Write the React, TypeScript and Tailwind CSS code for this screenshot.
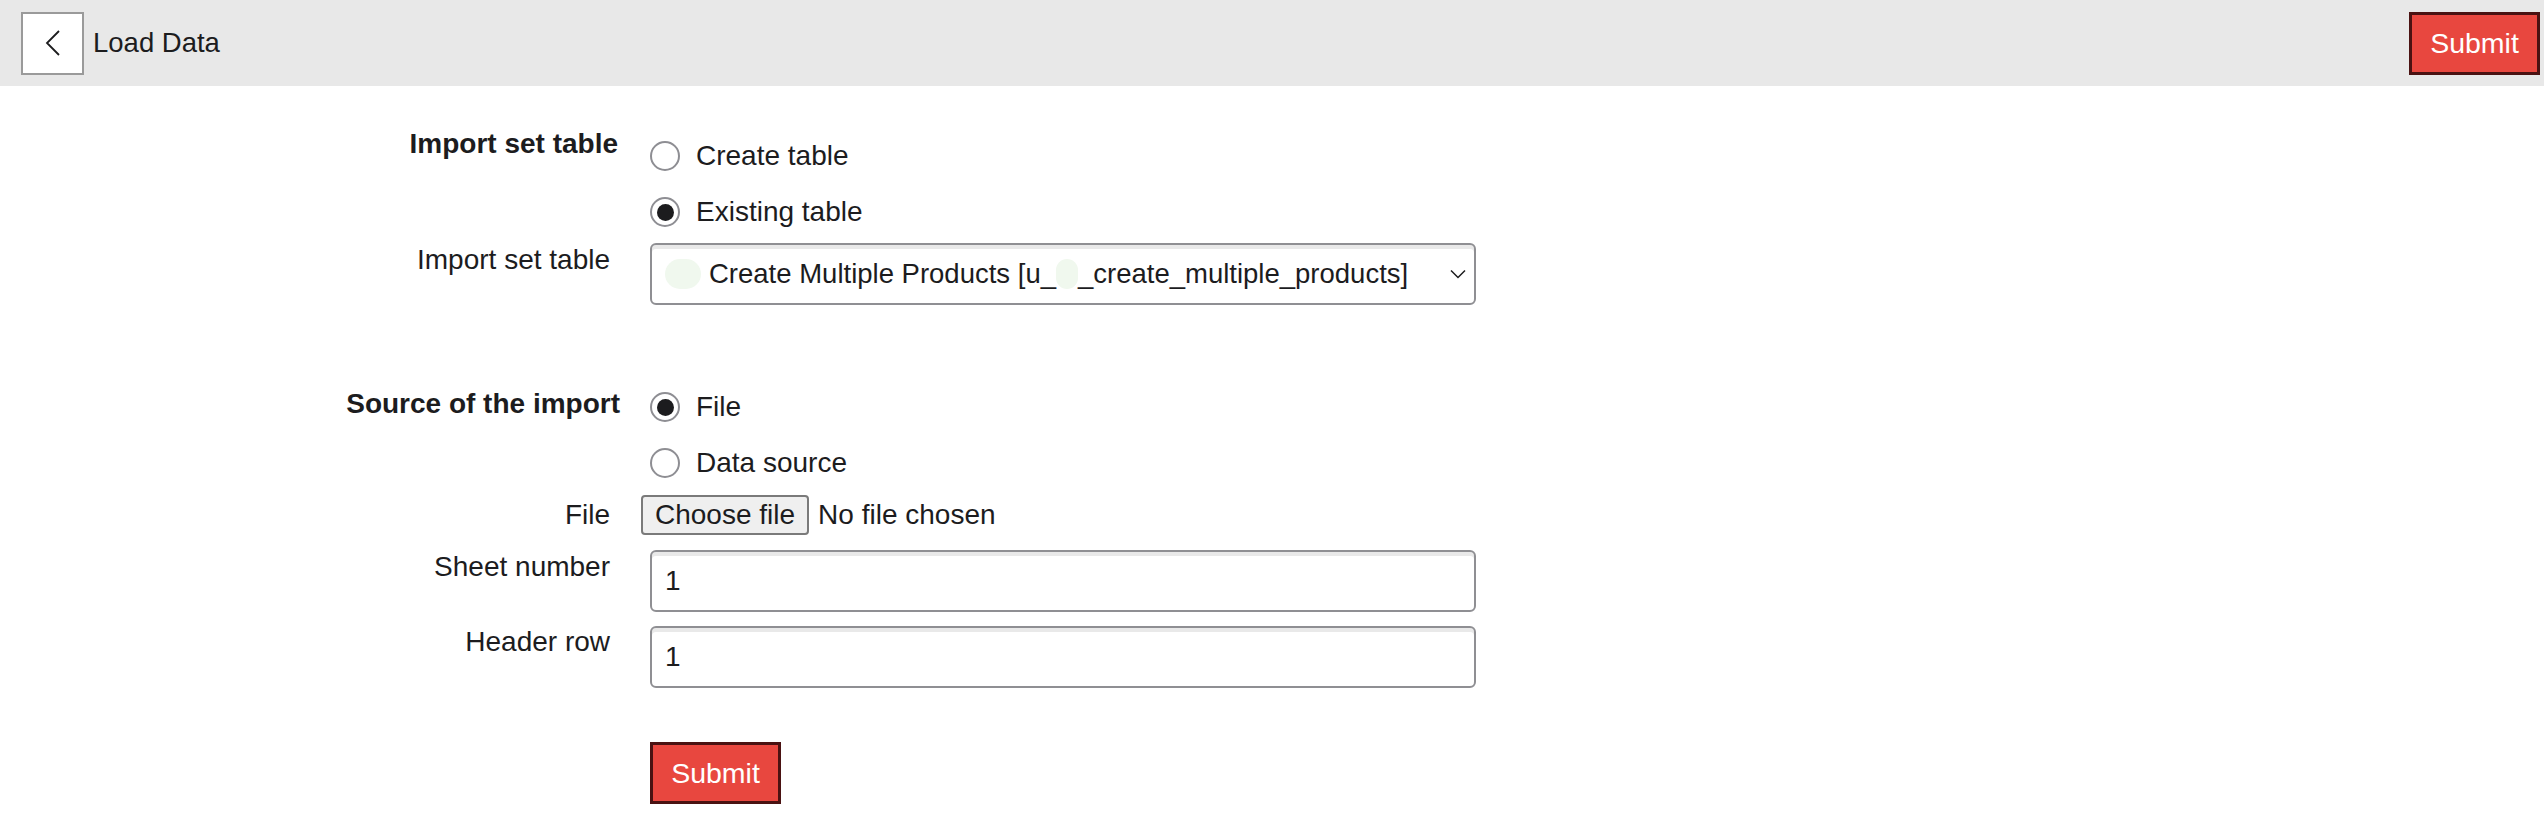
import { ChangeEvent, useState } from 'react';

function Radio({ checked, label, onChange }: { checked: boolean; label: string; onChange: () => void }) {
  return (
    <label className="h-[56px] flex items-center gap-[16px] cursor-pointer" onClick={onChange}>
      <span className="w-[30px] h-[30px] rounded-full border-2 border-[#8e8e93] bg-white flex items-center justify-center">
        {checked && <span className="w-[17px] h-[17px] rounded-full bg-[#1c1c1e]" />}
      </span>
      <span className="text-[28px] leading-[30px]">{label}</span>
    </label>
  );
}

export default function App() {
  const [tableMode, setTableMode] = useState<'create' | 'existing'>('existing');
  const [source, setSource] = useState<'file' | 'datasource'>('file');
  const [sheet, setSheet] = useState('1');
  const [headerRow, setHeaderRow] = useState('1');

  const inputCls =
    'w-[826px] h-[62px] rounded-[6px] border-2 border-[#8f8f93] bg-white px-[13px] text-[28px] text-[#1c1c1e] shadow-[inset_0_4px_0_#e9e9e9] outline-none';

  return (
    <div className="min-h-screen bg-white text-[#1c1c1e] font-['Liberation_Sans',Arial,sans-serif]">
      {/* Top bar */}
      <header className="h-[86px] bg-[#e8e8e8] flex items-center justify-between pl-[21px] pr-[4px]">
        <div className="flex items-center gap-[9px]">
          <button className="w-[63px] h-[63px] bg-white border-2 border-[#9a9a9a] flex items-center justify-center">
            <svg width="16" height="26" viewBox="0 0 16 26" fill="none">
              <path d="M14 1 L2 13 L14 25" stroke="#1c1c1e" strokeWidth="1.8" />
            </svg>
          </button>
          <h1 className="text-[27.5px] leading-none">Load Data</h1>
        </div>
        <button className="w-[131px] h-[63px] bg-[#e8473f] border-[3px] border-[#4a1212] text-white text-[28.5px]">
          Submit
        </button>
      </header>

      <form className="pt-[42px]" onSubmit={e => e.preventDefault()}>
        {/* Import set table */}
        <div className="flex">
          <div className="w-[620px] pr-[2px] pt-[1px] text-right font-bold text-[28px] leading-[30px]">Import set table</div>
          <div className="ml-[30px] flex flex-col">
            <Radio checked={tableMode === 'create'} label="Create table" onChange={() => setTableMode('create')} />
            <Radio checked={tableMode === 'existing'} label="Existing table" onChange={() => setTableMode('existing')} />
          </div>
        </div>

        <div className="flex mt-[3px]">
          <div className="w-[620px] pr-[10px] pt-[2px] text-right text-[28px] leading-[30px]">Import set table</div>
          <div className="ml-[30px] relative w-[826px] h-[62px] rounded-[6px] border-2 border-[#8f8f93] bg-white shadow-[inset_0_4px_0_#e9e9e9] flex items-center pl-[13px] pr-[8px]">
            <span className="w-[36px] h-[30px] rounded-full bg-[#f0f8ee] mr-[8px]" />
            <span className="text-[27.5px] whitespace-nowrap flex items-center">
              Create Multiple Products [u_
              <span className="inline-block w-[22px] h-[30px] rounded-full bg-[#f0f8ee]" />
              _create_multiple_products]
            </span>
            <svg className="ml-auto" width="16" height="10" viewBox="0 0 16 10" fill="none">
              <path d="M1 1.5 L8 8.5 L15 1.5" stroke="#1c1c1e" strokeWidth="1.5" />
            </svg>
          </div>
        </div>

        {/* Source of the import */}
        <div className="flex mt-[74px]">
          <div className="w-[620px] pt-[10px] text-right font-bold text-[28px] leading-[30px]">Source of the import</div>
          <div className="ml-[30px] flex flex-col">
            <Radio checked={source === 'file'} label="File" onChange={() => setSource('file')} />
            <Radio checked={source === 'datasource'} label="Data source" onChange={() => setSource('datasource')} />
          </div>
        </div>

        <div className="flex mt-[4px]">
          <div className="w-[620px] pr-[10px] pt-[5px] text-right text-[28px] leading-[30px]">File</div>
          <div className="ml-[21px] flex items-center gap-[9px]">
            <button
              type="button"
              className="h-[40px] px-[12px] rounded-[4px] border-2 border-[#7a7a7a] bg-[#efefef] text-[28px] leading-none"
            >
              Choose file
            </button>
            <span className="text-[28px] leading-[40px]">No file chosen</span>
          </div>
        </div>

        <div className="flex mt-[15px]">
          <div className="w-[620px] pr-[10px] pt-[2px] text-right text-[28px] leading-[30px]">Sheet number</div>
          <input
            className={`ml-[30px] ${inputCls}`}
            value={sheet}
            onChange={(e: ChangeEvent<HTMLInputElement>) => setSheet(e.target.value)}
          />
        </div>

        <div className="flex mt-[14px]">
          <div className="w-[620px] pr-[10px] pt-[1px] text-right text-[28px] leading-[30px]">Header row</div>
          <input
            className={`ml-[30px] ${inputCls}`}
            value={headerRow}
            onChange={(e: ChangeEvent<HTMLInputElement>) => setHeaderRow(e.target.value)}
          />
        </div>

        <div className="flex mt-[54px]">
          <div className="w-[620px]" />
          <button
            type="submit"
            className="ml-[30px] w-[131px] h-[62px] bg-[#e8473f] border-[3px] border-[#4a1212] text-white text-[28.5px]"
          >
            Submit
          </button>
        </div>
      </form>
    </div>
  );
}
